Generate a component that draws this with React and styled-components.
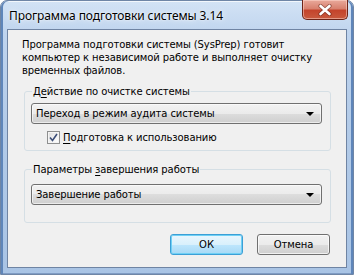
import React from "react";
import styled, { createGlobalStyle } from "styled-components";

const GlobalStyle = createGlobalStyle`
  html, body { margin: 0; padding: 0; background: #ffffff; }
  body { width: 354px; height: 275px; overflow: hidden; }
  * { box-sizing: border-box; }
`;

const Window = styled.div`
  width: 354px;
  height: 275px;
  display: flex;
  flex-direction: column;
  border: 1px solid #6f86a6;
  border-radius: 7px 7px 0 0;
  padding: 0 6px 6px 6px;
  background: linear-gradient(180deg, #d3e3f5 0%, #bfd4ee 12%, #b3cbe8 45%, #a9c4e5 100%);
  box-shadow: inset 2px 0 0 #5f86ba, inset -2px 0 0 #5f86ba, inset 0 -1px 0 #7f9cc4,
    inset 0 1px 0 rgba(255, 255, 255, 0.7);
`;

const TitleBar = styled.div`
  height: 28px;
  display: flex;
  align-items: flex-start;
  justify-content: space-between;
`;

const Title = styled.div`
  font-family: "Noto Sans", "Open Sans", sans-serif;
  font-size: 12px;
  color: #000;
  margin: 6px 0 0 2px;
  line-height: 17px;
  letter-spacing: -0.1px;
  text-shadow: 0 0 6px rgba(255, 255, 255, 0.9), 0 0 2px rgba(255, 255, 255, 0.9);
`;

const CloseButton = styled.div`
  width: 46px;
  height: 20px;
  margin-top: -1px;
  margin-right: -1px;
  display: flex;
  align-items: center;
  justify-content: center;
  border: 1px solid #6d2418;
  border-top: none;
  border-radius: 0 0 5px 5px;
  background: linear-gradient(180deg, #e9a99b 0%, #d8816f 45%, #c4442c 55%, #c95a3e 100%);
  box-shadow: inset 0 0 0 1px rgba(255, 220, 210, 0.5);
`;

const Client = styled.div`
  flex: 1;
  display: flex;
  flex-direction: column;
  border: 1px solid #6f84a3;
  background: #f0f0f0;
  font-family: "DejaVu Sans", sans-serif;
  font-size: 10px;
  letter-spacing: -0.1px;
  color: #000;
`;

const Description = styled.p`
  margin: 8px 0 0 0;
  padding: 0 10px 0 14px;
  line-height: 13px;
`;

const Group = styled.fieldset`
  margin: ${(p) => p.$top}px 15px 0 16px;
  padding: 0 8px ${(p) => p.$bottom}px 6px;
  border: 1px solid #d5dfe5;
  border-radius: 3px;
  min-width: 0;
`;

const Legend = styled.legend`
  padding: 0 1px;
  margin-left: 1px;
  line-height: 13px;
`;

const Key = styled.span`
  text-decoration: underline;
  text-underline-offset: 2px;
`;

const Combo = styled.div`
  margin-top: ${(p) => p.$top}px;
  height: 21px;
  display: flex;
  align-items: center;
  justify-content: space-between;
  padding: 0 7px 0 4px;
  border: 1px solid #707070;
  border-radius: 3px;
  background: linear-gradient(180deg, #f2f2f2 0%, #ebebeb 50%, #dddddd 50%, #cfcfcf 100%);
  box-shadow: inset 0 0 0 1px rgba(255, 255, 255, 0.6);
`;

const Arrow = styled.span`
  width: 0;
  height: 0;
  border-left: 4px solid transparent;
  border-right: 4px solid transparent;
  border-top: 4px solid #000;
  margin-top: 1px;
`;

const CheckRow = styled.label`
  margin: 7px 0 0 16px;
  display: flex;
  align-items: center;
  gap: 3px;
  height: 13px;
`;

const CheckBox = styled.span`
  width: 13px;
  height: 13px;
  flex: none;
  display: flex;
  align-items: center;
  justify-content: center;
  border: 1px solid #8e8f8f;
  background: linear-gradient(135deg, #dcdcdc 0%, #f4f4f4 60%, #ffffff 100%);
  box-shadow: inset 0 0 0 1px #f4f4f4;
`;

const Buttons = styled.div`
  margin: 11px 16px 0 0;
  display: flex;
  justify-content: flex-end;
  gap: 14px;
`;

const Button = styled.div`
  width: 73px;
  height: 21px;
  display: flex;
  align-items: center;
  justify-content: center;
  border-radius: 3px;
  border: 1px solid ${(p) => (p.$default ? "#3c9fd6" : "#707070")};
  background: ${(p) =>
    p.$default
      ? "linear-gradient(180deg, #eaf6fd 0%, #d9f0fc 50%, #bee6fd 50%, #a7d9f5 100%)"
      : "linear-gradient(180deg, #f2f2f2 0%, #ebebeb 50%, #dddddd 50%, #cfcfcf 100%)"};
  box-shadow: inset 0 0 0 1px ${(p) => (p.$default ? "#6fd0f5" : "rgba(255,255,255,0.7)")};
`;

export default function App() {
  return (
    <>
      <GlobalStyle />
      <Window>
        <TitleBar>
          <Title>Программа подготовки системы 3.14</Title>
          <CloseButton>
            <svg width="16" height="12" viewBox="0 0 16 12">
              <path
                d="M3.5 2 L12.5 10 M12.5 2 L3.5 10"
                fill="none"
                stroke="#5a1e12"
                strokeWidth="4.2"
                strokeLinecap="round"
                opacity="0.55"
              />
              <path
                d="M3.5 2 L12.5 10 M12.5 2 L3.5 10"
                fill="none"
                stroke="#ffffff"
                strokeWidth="2.6"
                strokeLinecap="round"
              />
            </svg>
          </CloseButton>
        </TitleBar>
        <Client>
          <Description>
            Программа подготовки системы (SysPrep) готовит компьютер к независимой работе и
            выполняет очистку временных файлов.
          </Description>
          <Group $top={8} $bottom={6}>
            <Legend>
              Д<Key>е</Key>йствие по очистке системы
            </Legend>
            <Combo $top={5}>
              <span>Переход в режим аудита системы</span>
              <Arrow />
            </Combo>
            <CheckRow>
              <CheckBox>
                <svg width="9" height="9" viewBox="0 0 9 9">
                  <path
                    d="M1 4.5 L3.5 7.5 L8 1"
                    fill="none"
                    stroke="#3c4e78"
                    strokeWidth="1.6"
                  />
                </svg>
              </CheckBox>
              <span>
                <Key>П</Key>одготовка к использованию
              </span>
            </CheckRow>
          </Group>
          <Group $top={12} $bottom={17}>
            <Legend>
              Параметры <Key>з</Key>авершения работы
            </Legend>
            <Combo $top={8}>
              <span>Завершение работы</span>
              <Arrow />
            </Combo>
          </Group>
          <Buttons>
            <Button $default>ОК</Button>
            <Button>Отмена</Button>
          </Buttons>
        </Client>
      </Window>
    </>
  );
}
